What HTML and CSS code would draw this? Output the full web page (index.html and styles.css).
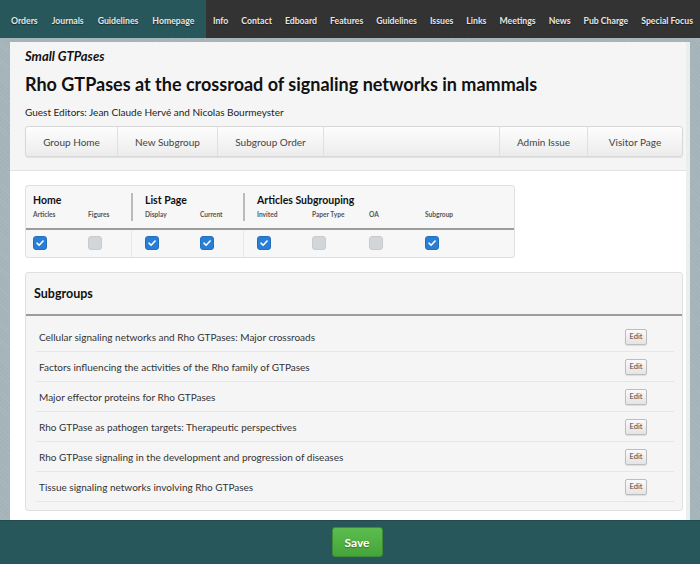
FILE: index.html
```html
<!DOCTYPE html>
<html>
<head>
<meta charset="utf-8">
<link rel="stylesheet" href="styles.css">
</head>
<body>
<nav class="topnav">
  <div class="nav-left">
    <a>Orders</a><a>Journals</a><a>Guidelines</a><a>Homepage</a>
  </div>
  <div class="nav-right">
    <a>Info</a><a>Contact</a><a>Edboard</a><a>Features</a><a>Guidelines</a><a>Issues</a><a>Links</a><a>Meetings</a><a>News</a><a>Pub Charge</a><a>Special Focus</a>
  </div>
</nav>
<div class="wrap">
  <div class="panel">
    <header class="head">
      <div class="journal">Small GTPases</div>
      <h1 class="title">Rho GTPases at the crossroad of signaling networks in mammals</h1>
      <div class="editors">Guest Editors: Jean Claude Hervé and Nicolas Bourmeyster</div>
      <div class="toolbar">
        <span class="tb-btn w1">Group Home</span>
        <span class="tb-btn w2">New Subgroup</span>
        <span class="tb-btn w3">Subgroup Order</span>
        <span class="tb-spacer"></span>
        <span class="tb-btn w4 bl">Admin Issue</span>
        <span class="tb-btn w5">Visitor Page</span>
      </div>
    </header>
    <main class="content">
      <div class="opts">
        <div class="opts-head">
          <div class="grp g1">
            <div class="grp-title">Home</div>
            <div class="subs"><span class="s s1">Articles</span><span class="s s2">Figures</span></div>
          </div>
          <div class="grp g2">
            <div class="grp-title">List Page</div>
            <div class="subs"><span class="s s1">Display</span><span class="s s2">Current</span></div>
          </div>
          <div class="grp g3">
            <div class="grp-title">Articles Subgrouping</div>
            <div class="subs"><span class="s s1">Invited</span><span class="s s2">Paper Type</span><span class="s s3">OA</span><span class="s s4">Subgroup</span></div>
          </div>
        </div>
        <div class="opts-row">
          <div class="grp g1">
            <div class="cbs">
              <span class="cb on s1"><svg viewBox="0 0 14 14"><path d="M3.5 7.2 L6 9.6 L10.6 4.6" fill="none" stroke="#fff" stroke-width="1.8" stroke-linecap="round" stroke-linejoin="round"/></svg></span>
              <span class="cb s2"></span>
            </div>
          </div>
          <div class="grp g2">
            <div class="cbs">
              <span class="cb on s1"><svg viewBox="0 0 14 14"><path d="M3.5 7.2 L6 9.6 L10.6 4.6" fill="none" stroke="#fff" stroke-width="1.8" stroke-linecap="round" stroke-linejoin="round"/></svg></span>
              <span class="cb on s2"><svg viewBox="0 0 14 14"><path d="M3.5 7.2 L6 9.6 L10.6 4.6" fill="none" stroke="#fff" stroke-width="1.8" stroke-linecap="round" stroke-linejoin="round"/></svg></span>
            </div>
          </div>
          <div class="grp g3">
            <div class="cbs">
              <span class="cb on s1"><svg viewBox="0 0 14 14"><path d="M3.5 7.2 L6 9.6 L10.6 4.6" fill="none" stroke="#fff" stroke-width="1.8" stroke-linecap="round" stroke-linejoin="round"/></svg></span>
              <span class="cb s2"></span>
              <span class="cb s3"></span>
              <span class="cb on s4"><svg viewBox="0 0 14 14"><path d="M3.5 7.2 L6 9.6 L10.6 4.6" fill="none" stroke="#fff" stroke-width="1.8" stroke-linecap="round" stroke-linejoin="round"/></svg></span>
            </div>
          </div>
        </div>
      </div>
      <section class="subgroups">
        <h2 class="sg-title">Subgroups</h2>
        <ul class="sg-list">
          <li><span>Cellular signaling networks and Rho GTPases: Major crossroads</span><button class="edit">Edit</button></li>
          <li><span>Factors influencing the activities of the Rho family of GTPases</span><button class="edit">Edit</button></li>
          <li><span>Major effector proteins for Rho GTPases</span><button class="edit">Edit</button></li>
          <li><span>Rho GTPase as pathogen targets: Therapeutic perspectives</span><button class="edit">Edit</button></li>
          <li><span>Rho GTPase signaling in the development and progression of diseases</span><button class="edit">Edit</button></li>
          <li><span>Tissue signaling networks involving Rho GTPases</span><button class="edit">Edit</button></li>
        </ul>
      </section>
    </main>
  </div>
</div>
<footer class="footer">
  <button class="save">Save</button>
</footer>
</body>
</html>
```

FILE: styles.css
```css
* { box-sizing: border-box; }
html, body { margin: 0; padding: 0; }
body {
  width: 700px;
  height: 564px;
  overflow: hidden;
  font-family: Lato, "Open Sans", sans-serif;
  color: #333;
  background-color: #a3b3b8;
  background-image: repeating-linear-gradient(45deg, rgba(255,255,255,0.07) 0 1px, transparent 1px 3px);
}
.topnav {
  display: flex;
  height: 38px;
  font-size: 8.7px;
  font-weight: 700;
  color: #e6e6e6;
  text-shadow: 0 1px 1px rgba(0,0,0,0.5);
  white-space: nowrap;
}
.nav-left {
  width: 206px;
  background: #27575a;
  display: flex;
  align-items: center;
  padding-left: 11px;
  gap: 14px;
  padding-top: 2px;
}
.nav-right {
  flex: 1;
  background: #333333;
  display: flex;
  align-items: center;
  padding-left: 7px;
  gap: 13px;
  padding-top: 2px;
  overflow: hidden;
}
.wrap {
  padding: 4px 10px 0 10px;
}
.panel {
  width: 680px;
  height: 478px;
  background: #fff;
  border-right: 4px solid #e9eeef;
  display: flex;
  flex-direction: column;
}
.head {
  background: #f5f5f5;
  border-bottom: 1px solid #e2e2e2;
  padding: 6px 3px 13px 15px;
}
.journal {
  font-size: 13px;
  font-weight: 700;
  font-style: italic;
  color: #111;
  line-height: 16px;
}
.title {
  margin: 8px 0 0 0;
  font-size: 18px;
  font-weight: 700;
  color: #111;
  line-height: 24px;
}
.editors {
  margin-top: 9px;
  font-size: 10px;
  color: #222;
  line-height: 14px;
}
.toolbar {
  margin-top: 7px;
  height: 31px;
  display: flex;
  background: linear-gradient(#fdfdfd, #ececec);
  border: 1px solid #d8d8d8;
  border-radius: 3px;
  box-shadow: 0 1px 1px rgba(0,0,0,0.08);
  font-size: 10px;
  color: #444;
}
.tb-btn {
  display: flex;
  align-items: center;
  justify-content: center;
  border-right: 1px solid #e0e0e0;
}
.tb-btn.bl { border-left: 1px solid #e0e0e0; }
.tb-btn:last-child { border-right: none; }
.w1 { width: 92px; }
.w2 { width: 100px; }
.w3 { width: 106px; }
.w4 { width: 89px; }
.w5 { width: 94px; }
.tb-spacer { flex: 1; }
.content {
  flex: 1;
  padding: 14px 3px 0 15px;
}
.opts {
  width: 490px;
  height: 73px;
  border: 1px solid #e0e0e0;
  border-radius: 3px;
  background: #f7f7f7;
}
.opts-head {
  display: flex;
  height: 44px;
  border-bottom: 2px solid #9c9c9c;
}
.opts-row {
  display: flex;
  height: 27px;
}
.grp { padding-left: 12px; }
.g1 { width: 105px; padding-left: 7px; }
.g2 { width: 112px; border-left: 2px solid #bbb; }
.g3 { flex: 1; border-left: 2px solid #bbb; }
.opts-head .grp { margin: 7px 0; }
.opts-row .g2, .opts-row .g3 { border-left: 1px solid #e8e8e8; }
.opts-row .g2 { width: 112px; padding-left: 13px; }
.opts-row .g3 { padding-left: 13px; }
.grp-title {
  font-size: 10.5px;
  font-weight: 700;
  color: #111;
  line-height: 14px;
}
.subs, .cbs {
  position: relative;
}
.subs {
  height: 12px;
  margin-top: 3px;
  font-size: 6.6px;
  font-weight: 700;
  color: #555;
}
.s { position: absolute; top: 0; }
.s1 { left: 0; }
.s2 { left: 55px; }
.s3 { left: 112px; }
.s4 { left: 168px; }
.cbs { height: 27px; }
.cb {
  position: absolute;
  top: 6px;
  width: 14px;
  height: 14px;
  border-radius: 3px;
  background: #d3d6d9;
  border: 1px solid #c8cbce;
}
.cb.on {
  background: #2a7fd4;
  border-color: #2270c0;
}
.cb svg { display: block; width: 12px; height: 12px; }
.subgroups {
  margin-top: 14px;
  width: 658px;
  height: 239px;
  border: 1px solid #e0e0e0;
  border-radius: 3px;
  background: #f5f5f5;
}
.sg-title {
  margin: 0;
  height: 43px;
  padding: 13px 0 0 8px;
  font-size: 12.5px;
  font-weight: 700;
  color: #111;
  line-height: 16px;
  border-bottom: 2px solid #9c9c9c;
}
.sg-list {
  list-style: none;
  margin: 6px 8px 0 10px;
  padding: 0;
}
.sg-list li {
  display: flex;
  align-items: center;
  justify-content: space-between;
  height: 30px;
  border-bottom: 1px solid #e6e6e6;
  font-size: 10px;
  color: #333;
  padding-left: 3px;
  padding-right: 27px;
}
.edit {
  font-family: inherit;
  font-size: 7.5px;
  color: #444;
  width: 22px;
  height: 16px;
  padding: 0;
  border: 1px solid #bdbdbd;
  border-radius: 2px;
  background: linear-gradient(#fafafa, #e4e4e4);
  box-shadow: 0 1px 1px rgba(0,0,0,0.1);
}
.footer {
  height: 44px;
  background: #27575a;
  border-top: 1px solid #1f4b4d;
  display: flex;
  justify-content: center;
  padding-top: 6px;
}
.save {
  width: 51px;
  height: 30px;
  font-family: inherit;
  font-size: 12px;
  font-weight: 700;
  color: #fff;
  background: linear-gradient(#5cbd4f, #45a43a);
  border: 1px solid #3c8c33;
  border-radius: 3px;
  text-shadow: 0 1px 1px rgba(0,0,0,0.3);
  margin-left: 14px;
}
```
